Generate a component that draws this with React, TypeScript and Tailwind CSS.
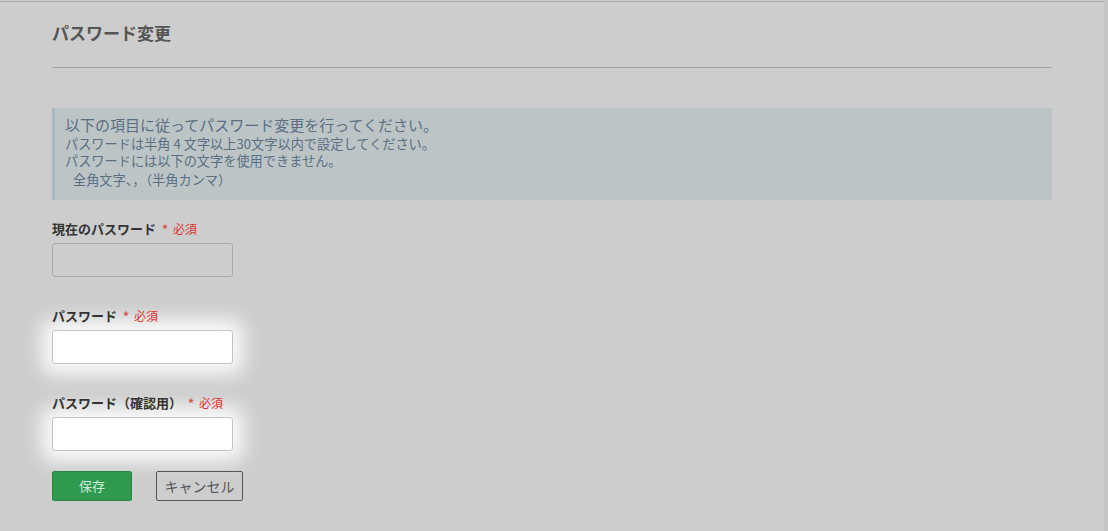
import React from 'react';

const Required: React.FC = () => (
  <>
    <span className="ml-[6px] text-[12px] text-[#d9534f]">*</span>
    <span className="ml-[5px] text-[12px] font-normal text-[#d9362f]">必須</span>
  </>
);

const PasswordChangePage: React.FC = () => {
  return (
    <div
      className="flex h-[531px] w-full bg-[#cdcdcd] text-[#333]"
      style={{ fontFamily: '"Noto Sans CJK JP", "Noto Sans", sans-serif' }}
    >
      <div className="flex-1">
        <div className="mt-[1px] h-[1px] bg-[#a8a8a8]" />

        <div className="w-[1000px] ml-[52px]">
          {/* Title */}
          <div className="pt-[19px] pb-[22px] border-b border-[#a2a2a2]">
            <h1 className="text-[17px] leading-[24px] font-bold text-[#555]">パスワード変更</h1>
          </div>

          {/* Notice */}
          <div className="mt-[40px] h-[92px] bg-[#bcc4c6] border-l-[3px] border-[#a6b8c6] pl-[10px] pt-[7px] text-[#5a6f82]">
            <p className="text-[15px] leading-[20px]">以下の項目に従ってパスワード変更を行ってください。</p>
            <p className="text-[13.2px] leading-[17px]">パスワードは半角 4 文字以上30文字以内で設定してください。</p>
            <p className="text-[13.2px] leading-[17px]">パスワードには以下の文字を使用できません。</p>
            <p className="text-[13.2px] leading-[17px] mt-[2px] pl-[8px]">全角文字、，（半角カンマ）</p>
          </div>

          {/* Form */}
          <div className="mt-[19px]">
            <label className="flex items-center h-[20px] text-[13px] font-bold text-[#333]">
              現在のパスワード<Required />
            </label>
            <input
              type="password"
              disabled
              className="mt-[4px] block w-[181px] h-[34px] rounded-[3px] border border-[#aaaaaa] bg-[#cdcdcd]"
            />

            <label className="mt-[29px] flex items-center h-[20px] text-[13px] font-bold text-[#333]">
              パスワード<Required />
            </label>
            <input
              type="password"
              className="mt-[4px] block w-[181px] h-[34px] rounded-[3px] border border-[#c8c4bc] bg-white shadow-[0_0_20px_10px_rgba(255,255,255,0.95)]"
            />

            <label className="mt-[29px] flex items-center h-[20px] text-[13px] font-bold text-[#333]">
              パスワード（確認用）<Required />
            </label>
            <input
              type="password"
              className="mt-[4px] block w-[181px] h-[34px] rounded-[3px] border border-[#c8c4bc] bg-white shadow-[0_0_20px_10px_rgba(255,255,255,0.95)]"
            />

            <div className="mt-[20px] flex items-center gap-[24px]">
              <button className="w-[80px] h-[30px] rounded-[2px] border border-[#2a8444] bg-[#2f9a4f] text-[13px] text-[#cfe8d6]">
                保存
              </button>
              <button className="w-[87px] h-[30px] rounded-[2px] border border-[#555] text-[14px] text-[#555]">
                キャンセル
              </button>
            </div>
          </div>
        </div>
      </div>
      <div className="w-[4px] bg-[#c5c5c5]" />
    </div>
  );
};

export default function App() {
  return <PasswordChangePage />;
}
